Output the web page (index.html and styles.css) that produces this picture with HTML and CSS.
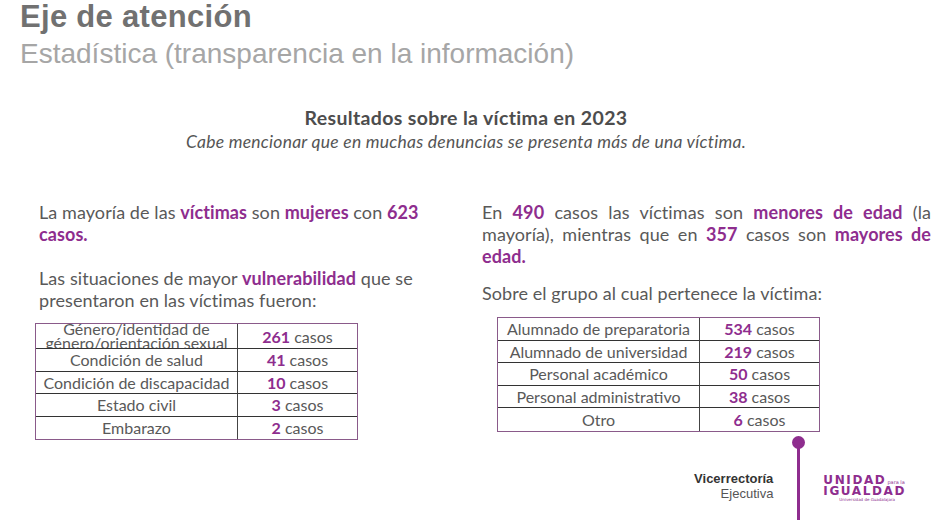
FILE: index.html
```html
<!DOCTYPE html>
<html lang="es">
<head>
<meta charset="utf-8">
<title>Eje de atención</title>
<link rel="stylesheet" href="styles.css">
</head>
<body>
<div class="slide">
  <header class="head">
    <h1 class="title">Eje de atención</h1>
    <p class="subtitle">Estadística (transparencia en la información)</p>
  </header>
  <section class="intro">
    <h2 class="intro-title">Resultados sobre la víctima en 2023</h2>
    <p class="intro-note">Cabe mencionar que en muchas denuncias se presenta más de una víctima.</p>
  </section>
  <div class="cols">
    <div class="col col-left">
      <p class="para para-a">La mayoría de las <b>víctimas</b> son <b>mujeres</b> con <b>623 casos.</b></p>
      <p class="para para-b">Las situaciones de mayor <b>vulnerabilidad</b> que se presentaron en las víctimas fueron:</p>
      <table class="stats stats-left">
        <tr class="first"><td class="label"><div class="clip"><span>Género/identidad de género/orientación sexual</span></div></td><td class="val"><b>261</b> casos</td></tr>
        <tr><td class="label">Condición de salud</td><td class="val"><b>41</b> casos</td></tr>
        <tr><td class="label">Condición de discapacidad</td><td class="val"><b>10</b> casos</td></tr>
        <tr><td class="label">Estado civil</td><td class="val"><b>3</b> casos</td></tr>
        <tr><td class="label">Embarazo</td><td class="val"><b>2</b> casos</td></tr>
      </table>
    </div>
    <div class="col col-right">
      <p class="para para-c justify">En <b>490</b> casos las víctimas son <b>menores de edad</b> (la mayoría), mientras que en <b>357</b> casos son <b>mayores de edad.</b></p>
      <p class="para para-d">Sobre el grupo al cual pertenece la víctima:</p>
      <table class="stats stats-right">
        <tr><td class="label">Alumnado de preparatoria</td><td class="val"><b>534</b> casos</td></tr>
        <tr><td class="label">Alumnado de universidad</td><td class="val"><b>219</b> casos</td></tr>
        <tr><td class="label">Personal académico</td><td class="val"><b>50</b> casos</td></tr>
        <tr><td class="label">Personal administrativo</td><td class="val"><b>38</b> casos</td></tr>
        <tr><td class="label">Otro</td><td class="val"><b>6</b> casos</td></tr>
      </table>
      <footer class="brand">
        <div class="vice">
          <span class="vice-1">Vicerrectoría</span>
          <span class="vice-2">Ejecutiva</span>
        </div>
        <div class="pin"><span class="pin-dot"></span><span class="pin-line"></span></div>
        <div class="logo">
          <div class="logo-row"><span class="logo-big">UNIDAD</span><span class="logo-small">para la</span></div>
          <div class="logo-big">IGUALDAD</div>
          <div class="logo-tiny">Universidad de Guadalajara</div>
        </div>
      </footer>
    </div>
  </div>
</div>
</body>
</html>
```

FILE: styles.css
```css
* { box-sizing: border-box; }
html, body { margin: 0; padding: 0; background: #fff; }
body { width: 943px; height: 520px; overflow: hidden; font-family: Lato, "Noto Sans", sans-serif; color: #595959; }
.slide { width: 943px; height: 520px; }

.head { padding: 0 0 0 20px; }
.title { margin: 0; font-family: "Liberation Sans", Arial, sans-serif; font-weight: 700; font-size: 31px; line-height: 34px; letter-spacing: 0.3px; color: #717171; }
.subtitle { margin: 4px 0 0; font-family: "Liberation Sans", Arial, sans-serif; font-size: 28px; line-height: 32px; color: #a6a6a6; }

.intro { text-align: center; margin-top: 36px; padding-right: 11px; }
.intro-title { margin: 0; font-size: 19.5px; line-height: 24px; letter-spacing: 0.35px; font-weight: 700; color: #4d4d4d; }
.intro-note { margin: 1px 0 0; font-size: 17.5px; line-height: 22px; letter-spacing: 0.25px; font-style: italic; color: #555; }

.cols { display: grid; grid-template-columns: 420px 449px; column-gap: 23px; padding-left: 39px; margin-top: 48px; }
.col { display: flex; flex-direction: column; }
.para { margin: 0; font-size: 18px; line-height: 22px; letter-spacing: 0.08px; color: #595959; }
.para b { color: #8e2d8e; font-weight: 700; }
.para-a { margin-bottom: 21.5px; }
.para-b { margin-bottom: 12.5px; }
.para-c { margin-bottom: 15px; }
.para-d { margin-bottom: 13px; }
.justify { text-align: justify; }

.stats { border-collapse: separate; border-spacing: 0; border: 1px solid #8a5a8a; font-size: 16px; color: #595959; }
.stats td { height: 22.5px; padding: 0 3px; text-align: center; border-bottom: 1px solid #333; line-height: 19px; white-space: nowrap; }
.stats tr:last-child td { border-bottom: 0; }
.stats td.label { border-right: 1px solid #444; }
.stats b { color: #8e2d8e; font-weight: 700; }
.stats-left { width: 323px; margin-left: -4px; }
.stats-left td.label { width: 202px; }
.stats-left tr.first td { height: 25px; }
.clip { height: 24px; overflow: hidden; display: flex; flex-direction: column; justify-content: center; white-space: normal; line-height: 14px; }
.clip span { display: block; }
.stats-right { width: 323px; margin-left: 15px; }
.stats-right td.label { width: 202px; }

.brand { display: flex; justify-content: flex-end; align-items: flex-start; padding-right: 25px; margin-top: 4px; }
.vice { display: flex; flex-direction: column; align-items: flex-end; margin-top: 35px; font-family: "Liberation Sans", Arial, sans-serif; font-size: 13px; line-height: 15px; }
.vice-1 { font-weight: 700; color: #333; }
.vice-2 { color: #555; }
.pin { display: flex; flex-direction: column; align-items: center; width: 13px; margin: 0 18px 0 19px; }
.pin-dot { width: 13px; height: 13px; border-radius: 50%; background: #8e2d8e; }
.pin-line { width: 3px; height: 80px; margin-top: -1px; background: #8e2d8e; }
.logo { margin-top: 39px; font-family: "DejaVu Sans", sans-serif; color: #8e2d8e; }
.logo-row { display: flex; align-items: flex-end; }
.logo-big { font-size: 12px; font-weight: 700; letter-spacing: 1.6px; line-height: 11px; }
.logo-small { font-size: 5px; line-height: 8px; margin-left: 1px; color: #8e2d8e; }
.logo-tiny { font-size: 4px; line-height: 6px; color: #8e2d8e; padding-left: 16px; }
```
